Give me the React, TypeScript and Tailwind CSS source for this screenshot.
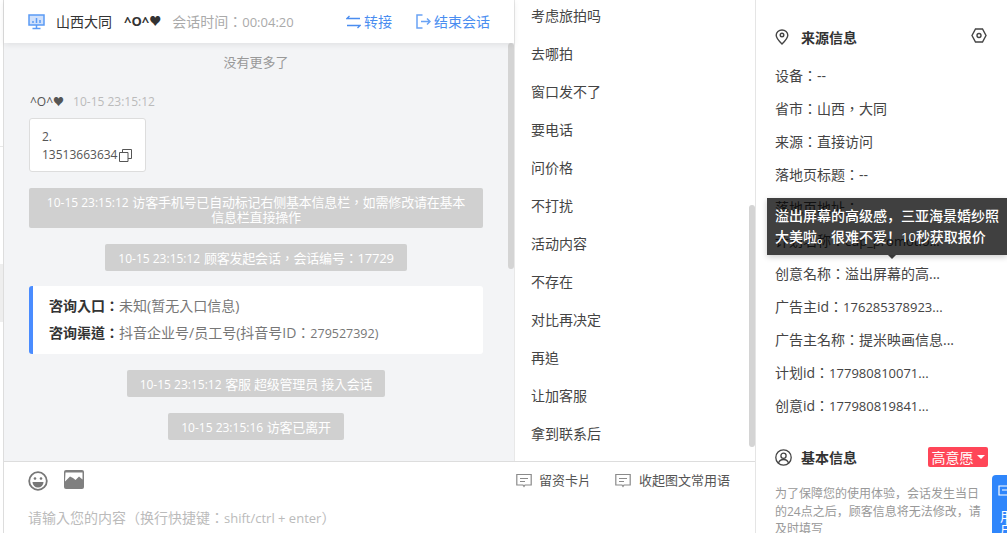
import React from "react";

const font = { fontFamily: '"Open Sans","Noto Sans CJK TC",sans-serif' };
const fontSC = { fontFamily: '"Open Sans","Noto Sans CJK SC",sans-serif' };

const quick = ["考虑旅拍吗","去哪拍","窗口发不了","要电话","问价格","不打扰","活动内容","不存在","对比再决定","再追","让加客服","拿到联系后"];
const info: [string, string?][] = [["设备：--"],["省市：山西，大同"],["来源：直接访问"],["落地页标题：--"],["落地页地址："],["计划名称：","cup_promotio..."],["创意名称：溢出屏幕的高..."],["广告主id：","176285378923..."],["广告主名称：提米映画信息..."],["计划id：","177980810071..."],["创意id：","177980819841..."]];

function Sys({ time, text, className = "" }: { time: string; text: string; className?: string }) {
  return (
    <div className={`shrink-0 self-center rounded-[2px] bg-[#d0d0d0] text-center text-white ${className}`}>
      <span className="text-[12px]">{time}</span> <span className="text-[13px] tracking-[-0.2px]">{text}</span>
    </div>
  );
}

function Chat({ className = "" }: { className?: string }) {
  return (
    <svg className={className} viewBox="0 0 16 16" fill="none" stroke="#8a8a8a" strokeWidth="1.2">
      <path d="M0.800 1.500h14.400v10.500h-6.200l-1 1.500-1-1.500h-6.200z" />
      <path d="M4 5.500h8M4 8.500h5" />
    </svg>
  );
}

export default function App() {
  return (
    <div style={font} className="relative flex h-[533px] w-[1007px] overflow-hidden bg-white text-[14px] text-[#444]">
      <div className="flex w-[4px] shrink-0 flex-col border-r border-[#ddd]">
        <div className="h-[147px] border-b border-[#e8e8e8]" />
        <div className="h-[117px]" />
        <div className="h-[58px] bg-[#eeeeee]" />
      </div>

      <div className="flex w-[751px] shrink-0 flex-col">
        <div className="flex h-[462px] shrink-0 border-b border-[#ddd]">
          <div className="relative flex w-[511px] shrink-0 flex-col border-r border-[#e8e8e8] bg-[#f3f4f6]">
            <div className="z-10 flex h-[43px] shrink-0 items-center bg-white pl-[25px] pr-[24px] shadow-[0_2px_6px_rgba(0,0,0,0.08)]">
              <svg className="-ml-px h-[17px] w-[17px]" viewBox="0 0 17 17" fill="none">
                <path d="M1 2h15v10H1z" fill="#cfe0fb" stroke="#5b9bf5" strokeWidth="1.5" />
                <path d="M5 10V8M8.500 10V5M12 10V7M8.500 12v3M4.500 15.500h8" stroke="#5b9bf5" strokeWidth="1.500" />
              </svg>
              <span className="ml-[11px] text-[#333]">山西大同</span>
              <span className="ml-[12px] flex items-center text-[13px] font-bold text-[#333]">^O^<span className="text-[12px]">♥</span></span>
              <span className="ml-[11px] text-[#aaa]">会话时间：<span className="text-[13px]">00:04:20</span></span>
              <div className="ml-auto flex items-center text-[#4a8df0]">
                <svg className="mr-[3px] h-[14px] w-[15px]" viewBox="0 0 15 14" fill="none" stroke="#4a8df0" strokeWidth="1.300">
                  <path d="M3.500 1L1 3.500h13M11.500 13L14 10.500H1" />
                </svg>
                <span>转接</span>
                <svg className="ml-[24px] mr-[3px] h-[15px] w-[15px]" viewBox="0 0 15 15" fill="none" stroke="#6aa3f5" strokeWidth="1.500">
                  <path d="M6.500 1H1v13h5.500M5 7.500h9M11 4.500l3 3-3 3" />
                </svg>
                <span>结束会话</span>
              </div>
            </div>

            <div className="flex min-h-0 flex-1 flex-col overflow-hidden pl-[25px] pr-[31px]">
              <div className="mt-[9px] text-center text-[13px] leading-[20px] text-[#999]">没有更多了</div>
              <div className="ml-px mt-[21px] flex items-center text-[12px] leading-[18px]">
                <span className="flex items-center text-[#555]">^O^<span className="text-[11px]">♥</span></span>
                <span className="ml-[9px] text-[#bbb]">10-15 23:15:12</span>
              </div>
              <div className="mt-[7px] h-[54px] w-[117px] shrink-0 rounded-[3px] border border-[#ddd] bg-white pl-[12px] pt-[9px] text-[12px] leading-[18px] text-[#555]">
                <div>2.</div>
                <div className="flex items-center">
                  13513663634
                  <svg className="ml-[2px] h-[13px] w-[13px] shrink-0" viewBox="0 0 13 13" fill="none" stroke="#555" strokeWidth="1">
                    <path d="M0.500 3.500h8.500v9h-8.500zM3.500 3.500v-3h9v9h-3.500" />
                  </svg>
                </div>
              </div>

              <Sys
                time="10-15 23:15:12"
                text="访客手机号已自动标记右侧基本信息栏，如需修改请在基本信息栏直接操作"
                className="mt-[16px] h-[40px] w-full px-[15px] pt-[7px] leading-[14px]"
              />
              <Sys time="10-15 23:15:12" text="顾客发起会话，会话编号：17729" className="mt-[16px] h-[27px] px-[13px] leading-[27px]" />

              <div className="mt-[15px] flex h-[68px] w-full shrink-0 flex-col justify-center gap-[7px] rounded-[3px] border-l-4 border-[#4a8cff] bg-white pb-[1px] pl-[16px] leading-[20px]">
                <div><b className="font-bold text-[#333]">咨询入口：</b><span className="text-[#777]">未知(暂无入口信息)</span></div>
                <div><b className="font-bold text-[#333]">咨询渠道：</b><span className="text-[#777]">抖音企业号/员工号(抖音号ID：<span className="text-[12.5px]">279527392)</span></span></div>
              </div>

              <Sys time="10-15 23:15:12" text="客服 超级管理员 接入会话" className="mt-[16px] h-[27px] px-[13px] leading-[27px]" />
              <Sys time="10-15 23:15:16" text="访客已离开" className="mt-[16px] h-[27px] px-[13px] leading-[27px]" />
            </div>

            <div className="absolute right-0 top-[43px] h-[226px] w-[6px] rounded-[3px] bg-[#d4d4d4]" />
          </div>

          <div className="relative min-w-0 flex-1 overflow-hidden">
            <div className="-mt-[3px]">
              {quick.map((q) => (
                <div key={q} className="h-[38px] pl-[16px] leading-[38px] text-[#444]">{q}</div>
              ))}
            </div>
            <div className="absolute right-0 top-[205px] h-[242px] w-[6px] rounded-[3px] bg-[#d4d4d4]" />
          </div>
        </div>

        <div className="flex min-h-0 flex-1 flex-col">
          <div className="mt-[8px] flex h-[22px] items-center">
            <svg className="ml-[24px] h-[20px] w-[20px]" viewBox="0 0 20 20" fill="none">
              <circle cx="10" cy="10" r="8.800" stroke="#777" strokeWidth="1.800" />
              <circle cx="7" cy="7.500" r="1.300" fill="#777" />
              <circle cx="13" cy="7.500" r="1.300" fill="#777" />
              <path d="M4.500 11h11a5.500 5.500 0 0 1-11 0z" fill="#777" />
            </svg>
            <svg className="ml-[16px] -mt-[2px] h-[20px] w-[20px]" viewBox="0 0 20 20">
              <rect width="20" height="19" rx="2" fill="#808080" />
              <path d="M1.500 2.500h17v7l-3.500-3-3.500 3.500-2.500-2-3-1.500-5 5z" fill="#fff" />
            </svg>
            <div className="ml-auto mr-[25px] flex items-center text-[13px] text-[#555]">
              <Chat className="h-[16px] w-[16px]" />
              <span className="ml-[7px]">留资卡片</span>
              <Chat className="ml-[24px] h-[16px] w-[16px]" />
              <span className="ml-[8px]">收起图文常用语</span>
            </div>
          </div>
          <div className="ml-[24px] mt-[16px] leading-[20px] text-[#bbb]">请输入您的内容（换行快捷键：<span className="text-[13px]">shift/ctrl + enter</span>）</div>
        </div>
      </div>

      <div className="min-w-0 flex-1 overflow-hidden border-l border-[#e5e5e5] pl-[19px]">
        <div className="mt-[27px] flex h-[20px] items-center">
          <svg className="h-[16px] w-[14px]" viewBox="0 0 14 16" fill="none" stroke="#444" strokeWidth="1.400">
            <path d="M7 15C3.500 11.500 1.200 8.800 1.200 6.200a5.800 5.200 0 0 1 11.600 0C12.800 8.800 10.500 11.500 7 15z" />
            <circle cx="7" cy="6" r="1.800" />
          </svg>
          <b className="ml-[12px] text-[#333]">来源信息</b>
          <svg className="ml-auto mr-[20px] -mt-[3px] h-[15px] w-[16px]" viewBox="0 0 16 15" fill="none" stroke="#444" strokeWidth="1.400">
            <path d="M4.500 1h7L15 7.500 11.500 14h-7L1 7.500z" />
            <circle cx="8" cy="7.500" r="2" />
          </svg>
        </div>
        <div className="mt-[12px]">
          {info.map(([a, b]) => (
            <div key={a} className="h-[33px] leading-[33px] text-[#444]">{a}{b && <span className="text-[13px]">{b}</span>}</div>
          ))}
        </div>
        <div className="mt-[25px] flex h-[20px] items-center">
          <svg className="h-[17px] w-[17px]" viewBox="0 0 17 17" fill="none" stroke="#444" strokeWidth="1.300">
            <circle cx="8.500" cy="8.500" r="7.700" />
            <circle cx="8.500" cy="6.800" r="2.600" />
            <path d="M3.500 14c.8-2.500 2.800-3.500 5-3.500s4.200 1 5 3.500" />
          </svg>
          <b className="ml-[9px] text-[#333]">基本信息</b>
          <div className="ml-auto mr-[19px] flex h-[20px] w-[60px] items-center justify-center rounded-[2px] bg-[#ff4658] text-white">
            高意愿
            <span className="ml-[3px] h-0 w-0 border-x-[4px] border-t-[4px] border-x-transparent border-t-white" />
          </div>
        </div>
        <div style={fontSC} className="mt-[18px] w-[214px] text-[12px] leading-[17.500px] text-[#999]">
          为了保障您的使用体验，会话发生当日的24点之后，顾客信息将无法修改，请及时填写
        </div>
      </div>

      <div style={fontSC} className="absolute left-[767px] top-[198px] w-[240px] bg-black/75 py-[7px] pl-[8px] text-[14px] font-medium leading-[21px] text-white shadow-[0_2px_6px_rgba(0,0,0,0.2)]">
        <div className="whitespace-nowrap">溢出屏幕的高级感，三亚海景婚纱照</div>
        <div className="whitespace-nowrap">大美啦。很难不爱！<span className="text-[13px]">10</span>秒获取报价</div>
        <div className="absolute left-[121px] top-full h-0 w-0 border-x-[4px] border-t-[4px] border-x-transparent border-t-black/75" />
      </div>

      <div className="absolute left-[992px] top-[475px] h-[58px] w-[15px] overflow-hidden rounded-tl-[4px] bg-[#2f86fb] pl-[6px] pt-[10px] text-[13px] leading-[13px] text-white">
        <svg className="h-[11px] w-[13px]" viewBox="0 0 13 11" fill="none" stroke="#fff" strokeWidth="1.200">
          <path d="M1 1h14v9H1zM4 5h6" />
        </svg>
        <div className="ml-[2px] mt-[14px] w-[14px]">用户</div>
      </div>
    </div>
  );
}
